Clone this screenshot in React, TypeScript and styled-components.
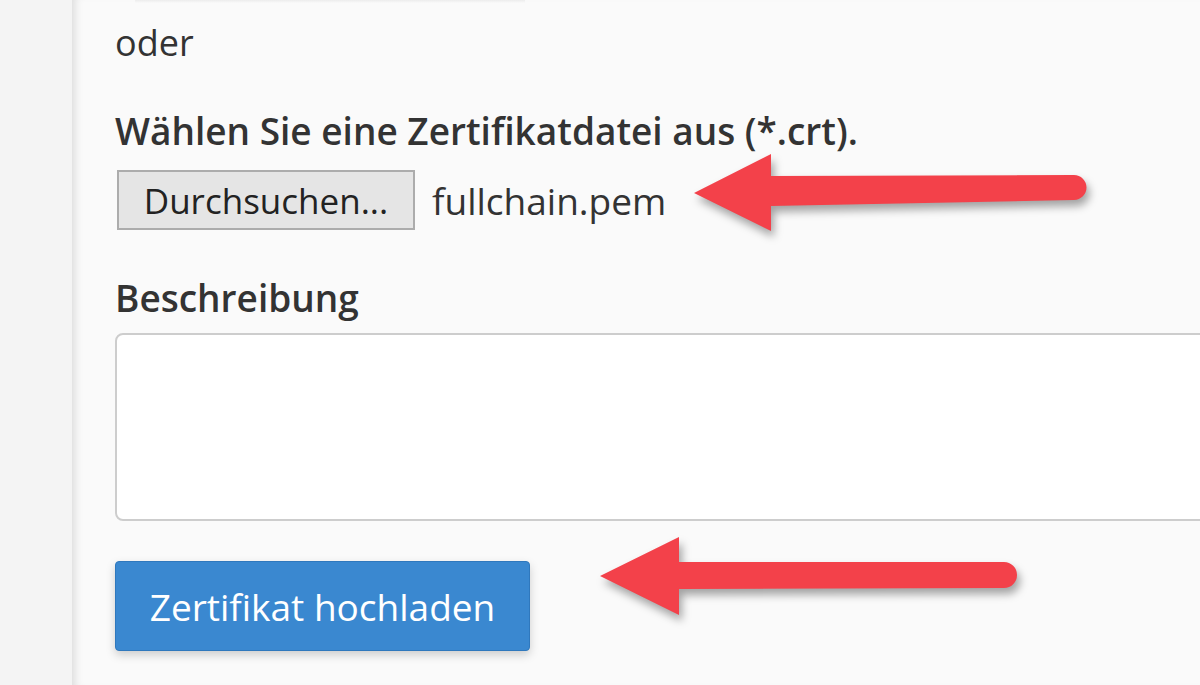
import * as React from "react";
import styled, { createGlobalStyle } from "styled-components";

const GlobalStyle = createGlobalStyle`
  html, body {
    margin: 0;
    padding: 0;
    background: #f4f4f4;
    font-family: "Open Sans", "Liberation Sans", sans-serif;
    color: #333;
  }
`;

const Page = styled.div`
  display: flex;
  width: 1200px;
  height: 685px;
  overflow: hidden;
`;

const Sidebar = styled.div`
  width: 72px;
  flex-shrink: 0;
  background: #f4f4f4;
`;

const Panel = styled.div`
  position: relative;
  flex: 1;
  background: #fafafa;
  border-left: 1px solid #e4e4e4;
  box-shadow: inset 8px 0 8px -6px rgba(0, 0, 0, 0.12);
  padding: 0 0 0 42px;
`;

const PrevEdge = styled.div`
  width: 390px;
  height: 3px;
  margin-left: 20px;
  background: linear-gradient(#ececec, #fafafa);
`;

const Plain = styled.div`
  font-size: 36px;
  line-height: 50px;
  margin-top: 15px;
`;

const Label = styled.div<{ $gap: number }>`
  font-size: 37px;
  font-weight: 600;
  line-height: 50px;
  margin-top: ${(p) => p.$gap}px;
`;

const FileRow = styled.div`
  display: flex;
  align-items: center;
  gap: 17px;
  margin-top: 14px;
  margin-left: 2px;
`;

const BrowseButton = styled.button`
  height: 60px;
  width: 298px;
  padding: 0;
  border: 2px solid #acacac;
  background: #e5e5e5;
  font-family: "Open Sans", "Liberation Sans", sans-serif;
  font-size: 35px;
  color: #222;
`;

const FileName = styled.span`
  font-size: 37px;
  color: #333;
`;

const TextArea = styled.textarea`
  display: block;
  box-sizing: border-box;
  width: 1120px;
  height: 188px;
  margin-top: 10px;
  border: 2px solid #cdcdcd;
  border-radius: 8px;
  background: #fff;
  resize: none;
`;

const SubmitButton = styled.button`
  display: block;
  margin-top: 40px;
  width: 415px;
  height: 90px;
  padding: 0;
  border: 1px solid #2f78bd;
  border-radius: 4px;
  background: #3a88d0;
  color: #fff;
  font-family: "Open Sans", "Liberation Sans", sans-serif;
  font-size: 37px;
  box-shadow: 0 4px 10px rgba(0, 0, 0, 0.18);
`;

const Arrow = styled.svg<{ $left: number; $top: number }>`
  position: absolute;
  left: ${(p) => p.$left}px;
  top: ${(p) => p.$top}px;
  overflow: visible;
  filter: drop-shadow(3px 6px 4px rgba(0, 0, 0, 0.35));
`;

export default function App() {
  return (
    <Page>
      <GlobalStyle />
      <Sidebar />
      <Panel>
        <PrevEdge />
        <Plain>oder</Plain>
        <Label $gap={38}>Wählen Sie eine Zertifikatdatei aus (*.crt).</Label>
        <FileRow>
          <BrowseButton>Durchsuchen...</BrowseButton>
          <FileName>fullchain.pem</FileName>
        </FileRow>
        <Label $gap={43}>Beschreibung</Label>
        <TextArea />
        <SubmitButton>Zertifikat hochladen</SubmitButton>

        <Arrow $left={607} $top={145} width={420} height={100} viewBox="0 0 420 100">
          <path
            d="M14 48 L91 9 L91 31 L394 30 A12.5 12.5 0 0 1 394 55 L91 61 L91 86 Z"
            fill="#f3414a"
          />
        </Arrow>
        <Arrow $left={512} $top={525} width={450} height={105} viewBox="0 0 450 105">
          <path
            d="M15 51 L94 12 L94 37 L419 37 A13 13 0 0 1 419 63 L94 64 L94 90 Z"
            fill="#f3414a"
          />
        </Arrow>
      </Panel>
    </Page>
  );
}
